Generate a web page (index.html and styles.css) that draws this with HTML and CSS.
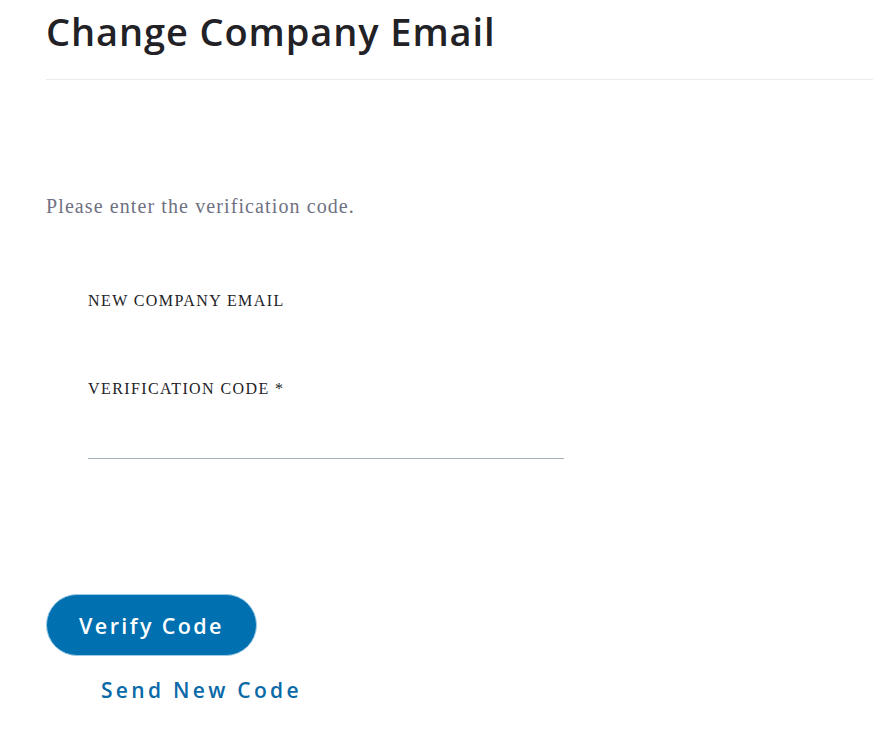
FILE: index.html
```html
<!DOCTYPE html>
<html>
<head>
<meta charset="utf-8">
<link rel="stylesheet" href="styles.css">
</head>
<body>
<div class="page">
  <header class="head">
    <h1 class="title">Change Company Email</h1>
  </header>
  <p class="intro">Please enter the verification code.</p>
  <div class="fields">
    <div class="field">
      <label class="label">NEW COMPANY EMAIL</label>
    </div>
    <div class="field">
      <label class="label">VERIFICATION CODE *</label>
      <input class="input" type="text">
    </div>
  </div>
  <div class="actions">
    <button class="btn">Verify Code</button>
    <a class="link" href="#">Send New Code</a>
  </div>
</div>
</body>
</html>
```
FILE: styles.css
```css
* { box-sizing: border-box; }
html, body { margin: 0; padding: 0; background: #fff; }
.page { padding-left: 46px; }
.head { border-bottom: 1px solid #e9ecef; padding-top: 7px; height: 80px; }
.title {
  margin: 0;
  font-family: "Open Sans", sans-serif;
  font-weight: 600;
  font-size: 38px;
  line-height: 48px;
  color: #222226;
  letter-spacing: 0.9px;
}
.intro {
  margin: 114px 0 0 0;
  font-family: "Liberation Serif", serif;
  font-size: 20px;
  line-height: 24px;
  letter-spacing: 1.1px;
  color: #6f7182;
}
.fields { padding-left: 42px; padding-top: 74px; }
.field { display: flex; flex-direction: column; }
.field + .field { margin-top: 70px; }
.label {
  font-family: "Liberation Serif", serif;
  font-size: 16px;
  line-height: 18px;
  letter-spacing: 1.4px;
  color: #222226;
}
.input {
  margin-top: 33px;
  width: 476px;
  height: 28px;
  border: none;
  border-bottom: 1px solid #a4aeb8;
  outline: none;
  background: transparent;
  padding: 0;
}
.actions { padding-top: 135px; display: flex; flex-direction: column; align-items: flex-start; }
.btn {
  width: 211px;
  height: 62px;
  border-radius: 31px;
  background: #0070b0;
  border: 1px solid #9ccbe6;
  color: #fff;
  font-family: "Open Sans", sans-serif;
  font-weight: 600;
  font-size: 21.5px;
  letter-spacing: 2.4px;
  padding: 0;
}
.link {
  margin: 21px 0 0 55px;
  font-family: "Open Sans", sans-serif;
  font-weight: 600;
  font-size: 21px;
  line-height: 26px;
  letter-spacing: 3.3px;
  color: #0a6aa8;
  text-decoration: none;
}
```
